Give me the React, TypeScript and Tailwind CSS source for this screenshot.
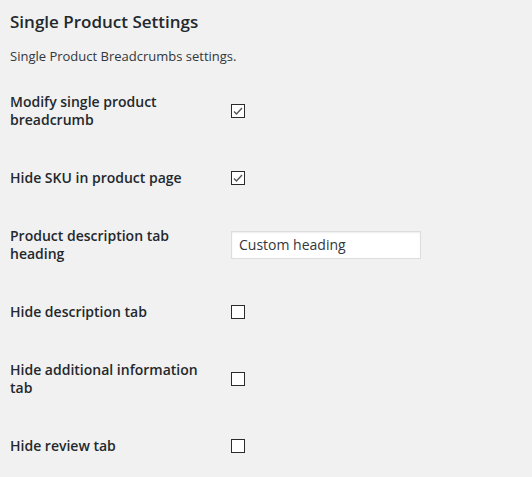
type Row = {
  label: string;
  kind: 'check' | 'text';
  checked?: boolean;
  value?: string;
};

const rows: Row[] = [
  { label: 'Modify single product breadcrumb', kind: 'check', checked: true },
  { label: 'Hide SKU in product page', kind: 'check', checked: true },
  { label: 'Product description tab heading', kind: 'text', value: 'Custom heading' },
  { label: 'Hide description tab', kind: 'check' },
  { label: 'Hide additional information tab', kind: 'check' },
  { label: 'Hide review tab', kind: 'check' },
];

function Checkbox({ checked }: { checked?: boolean }) {
  return (
    <span className="flex h-[14px] w-[14px] items-center justify-center border border-[#2b2b2b] bg-[#fff]">
      {checked && (
        <svg width="12" height="12" viewBox="0 0 12 12">
          <path d="M2 6.5 L4.5 9 L10 3" fill="none" stroke="#555" strokeWidth="1.4" />
        </svg>
      )}
    </span>
  );
}

export default function App() {
  return (
    <div
      className="h-[477px] w-[532px] overflow-hidden bg-[#f1f1f1] px-[10px] text-[#23282d]"
      style={{ fontFamily: '"Open Sans", "Noto Sans", sans-serif' }}
    >
      <h2 className="pt-[10px] text-[17px] leading-[24px] font-semibold">Single Product Settings</h2>
      <p className="mt-[13px] text-[13px] leading-[18px] text-[#32373c]">
        Single Product Breadcrumbs settings.
      </p>
      <div className="mt-[12px]">
        {rows.map((r) => (
          <div key={r.label} className="flex h-[67px] items-center">
            <div className="w-[221px] pr-[20px] text-[14px] leading-[18px] font-semibold">{r.label}</div>
            {r.kind === 'check' ? (
              <Checkbox checked={r.checked} />
            ) : (
              <div className="flex h-[28px] w-[190px] items-center border border-[#ddd] bg-white px-[7px] text-[14px] text-[#32373c] shadow-[inset_0_1px_2px_rgba(0,0,0,0.07)]">
                {r.value}
              </div>
            )}
          </div>
        ))}
      </div>
    </div>
  );
}
